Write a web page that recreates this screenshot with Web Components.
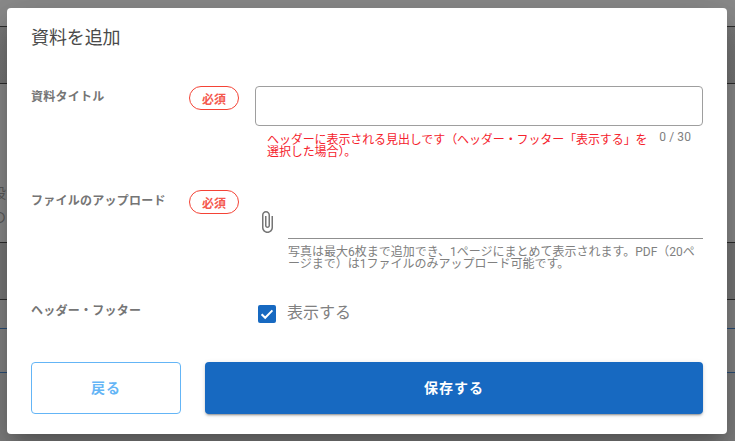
<!DOCTYPE html>
<html lang="ja">
<head>
<meta charset="utf-8">
<style>
html, body { margin: 0; height: 100%; overflow: hidden; }
body { font-family: Roboto, "Noto Sans CJK JP", sans-serif; }
</style>
</head>
<body>
<page-backdrop>
  <add-material-dialog heading="資料を追加">
    <form-row label="資料タイトル" required>
      <title-field
        hint="ヘッダーに表示される見出しです（ヘッダー・フッター「表示する」を選択した場合）。"
        counter="0 / 30"></title-field>
    </form-row>
    <form-row label="ファイルのアップロード" required>
      <upload-field hint="写真は最大6枚まで追加でき、1ページにまとめて表示されます。PDF（20ページまで）は1ファイルのみアップロード可能です。"></upload-field>
    </form-row>
    <form-row label="ヘッダー・フッター">
      <check-field label="表示する"></check-field>
    </form-row>
    <dialog-button slot="actions" kind="back">戻る</dialog-button>
    <dialog-button slot="actions" kind="save">保存する</dialog-button>
  </add-material-dialog>
</page-backdrop>

<script>
class PageBackdrop extends HTMLElement {
  constructor() {
    super();
    this.attachShadow({ mode: "open" });
    this.shadowRoot.innerHTML = `
<style>
:host { display: block; position: relative; width: 735px; height: 441px; overflow: hidden; background: #8a8a8a; }
.page { display: flex; flex-direction: column; height: 100%; }
.band { box-sizing: border-box; border-bottom: 1px solid #2e2e2e; flex: none; }
.b1 { height: 27px; background: #8b8b8b; }
.b2 { height: 57px; background: linear-gradient(#7a7a7a, #767676); }
.b3 { height: 159px; background: #8b8b8b; color: #5c5c5c; font-size: 14px; overflow: hidden; }
.b4 { height: 57px; background: #797979; }
.b5 { height: 29px; background: #858585; border-bottom-color: #2b4f78; }
.b6 { height: 44px; background: #858585; border-bottom-color: #2b4f78; }
.rest { flex: 1; background: #808080; }
.b3 span { display: block; margin-left: -8px; line-height: 24px; }
.b3 span:first-child { margin-top: 97px; }
</style>
<div class="page">
  <div class="band b1"></div>
  <div class="band b2"></div>
  <div class="band b3"><span>設</span><span>の</span></div>
  <div class="band b4"></div>
  <div class="band b5"></div>
  <div class="band b6"></div>
  <div class="rest"></div>
</div>
<slot></slot>`;
  }
}

class AddMaterialDialog extends HTMLElement {
  constructor() {
    super();
    this.attachShadow({ mode: "open" });
    this.shadowRoot.innerHTML = `
<style>
:host {
  display: flex; flex-direction: column; box-sizing: border-box;
  position: absolute; left: 7px; top: 8px; width: 720px; height: 426px;
  padding: 0 24px 20px; background: #fff; border-radius: 4px;
  box-shadow: 0 11px 15px -7px rgba(0,0,0,.2), 0 24px 38px 3px rgba(0,0,0,.14), 0 9px 46px 8px rgba(0,0,0,.12);
}
h2 { margin: 17px 0 0; font-size: 18px; line-height: 26px; font-weight: 400; color: #4a4a4a; letter-spacing: -.1px; }
.rows { flex: 1; display: flex; flex-direction: column; margin-top: 35px; }
.actions { display: grid; grid-template-columns: 150px 1fr; column-gap: 24px; height: 52px; }
</style>
<h2></h2>
<div class="rows"><slot></slot></div>
<div class="actions"><slot name="actions"></slot></div>`;
    this.shadowRoot.querySelector("h2").textContent = this.getAttribute("heading");
  }
}

class FormRow extends HTMLElement {
  constructor() {
    super();
    this.attachShadow({ mode: "open" });
    this.shadowRoot.innerHTML = `
<style>
:host { display: grid; grid-template-columns: 158px 66px 1fr; align-items: start; }
.label { font-size: 12px; line-height: 23px; font-weight: 700; letter-spacing: .25px; color: #757575; }
.badge {
  box-sizing: border-box; width: 50px; height: 24px; border: 1px solid #f44336; border-radius: 12px;
  display: flex; align-items: center; justify-content: center;
  font-size: 12px; font-weight: 700; color: #f4594e;
}
</style>
<div class="label"></div>
<div class="cell"></div>
<slot></slot>`;
    this.shadowRoot.querySelector(".label").textContent = this.getAttribute("label");
    if (this.hasAttribute("required")) {
      const badge = document.createElement("div");
      badge.className = "badge";
      badge.textContent = "必須";
      this.shadowRoot.querySelector(".cell").appendChild(badge);
    }
  }
}

class TitleField extends HTMLElement {
  constructor() {
    super();
    this.attachShadow({ mode: "open" });
    this.shadowRoot.innerHTML = `
<style>
:host { display: block; height: 104px; }
.box { box-sizing: border-box; height: 40px; border: 1px solid #9e9e9e; border-radius: 4px; }
.under { display: flex; justify-content: space-between; padding: 8px 12px 0; }
.hint { width: 384px; font-size: 12px; line-height: 12px; letter-spacing: -.1px; color: #f5222d; }
.count { font-size: 12px; line-height: 14px; letter-spacing: .1px; color: #808080; margin-top: -4px; }
</style>
<div class="box"></div>
<div class="under"><div class="hint"></div><div class="count"></div></div>`;
    this.shadowRoot.querySelector(".hint").textContent = this.getAttribute("hint");
    this.shadowRoot.querySelector(".count").textContent = this.getAttribute("counter");
  }
}

class UploadField extends HTMLElement {
  constructor() {
    super();
    this.attachShadow({ mode: "open" });
    this.shadowRoot.innerHTML = `
<style>
:host { display: grid; grid-template-columns: 33px 1fr; height: 110px; }
svg { display: block; width: 24px; height: 24px; margin-top: 20px; }
.line { height: 49px; box-sizing: border-box; border-bottom: 1px solid #8f8f8f; }
.hint { margin-top: 7px; font-size: 12px; line-height: 12px; color: #808080; }
</style>
<svg viewBox="0 0 24 24" fill="#757575"><path d="M16.5 6v11.5c0 2.21-1.79 4-4 4s-4-1.79-4-4V5c0-1.38 1.12-2.5 2.5-2.5s2.5 1.12 2.5 2.5v10.5c0 .55-.45 1-1 1s-1-.45-1-1V6H10v9.5c0 1.38 1.12 2.5 2.5 2.5s2.5-1.12 2.5-2.5V5c0-2.21-1.79-4-4-4S7 2.79 7 5v12.5c0 3.04 2.46 5.5 5.5 5.5s5.5-2.46 5.5-5.5V6h-1.5z"/></svg>
<div><div class="line"></div><div class="hint"></div></div>`;
    this.shadowRoot.querySelector(".hint").textContent = this.getAttribute("hint");
  }
}

class CheckField extends HTMLElement {
  constructor() {
    super();
    this.attachShadow({ mode: "open" });
    this.shadowRoot.innerHTML = `
<style>
:host { display: flex; align-items: center; height: 26px; margin-top: 1px; padding-left: 3px; }
.box { box-sizing: border-box; width: 18px; height: 18px; border-radius: 2px; background: #1769c1; margin-right: 11px; }
svg { display: block; }
.text { font-size: 16px; line-height: 24px; color: #808080; margin-top: -2px; }
</style>
<div class="box"><svg viewBox="0 0 18 18" width="18" height="18"><path d="M3.6 9.2 7.2 12.8 14.4 5.4" fill="none" stroke="#fff" stroke-width="2"/></svg></div>
<div class="text"></div>`;
    this.shadowRoot.querySelector(".text").textContent = this.getAttribute("label");
  }
}

class DialogButton extends HTMLElement {
  constructor() {
    super();
    this.attachShadow({ mode: "open" });
    this.shadowRoot.innerHTML = `
<style>
:host { display: flex; align-items: center; justify-content: center; box-sizing: border-box; padding-bottom: 2px; border-radius: 4px; font-size: 14px; font-weight: 700; letter-spacing: 1px; }
:host([kind="back"]) { border: 1px solid #64b5f6; color: #64b5f6; background: #fff; }
:host([kind="save"]) { background: #1769c1; color: #fff; box-shadow: 0 3px 1px -2px rgba(0,0,0,.2), 0 2px 2px 0 rgba(0,0,0,.14), 0 1px 5px 0 rgba(0,0,0,.12); }
</style>
<slot></slot>`;
  }
}

customElements.define("page-backdrop", PageBackdrop);
customElements.define("add-material-dialog", AddMaterialDialog);
customElements.define("form-row", FormRow);
customElements.define("title-field", TitleField);
customElements.define("upload-field", UploadField);
customElements.define("check-field", CheckField);
customElements.define("dialog-button", DialogButton);
</script>
</body>
</html>
